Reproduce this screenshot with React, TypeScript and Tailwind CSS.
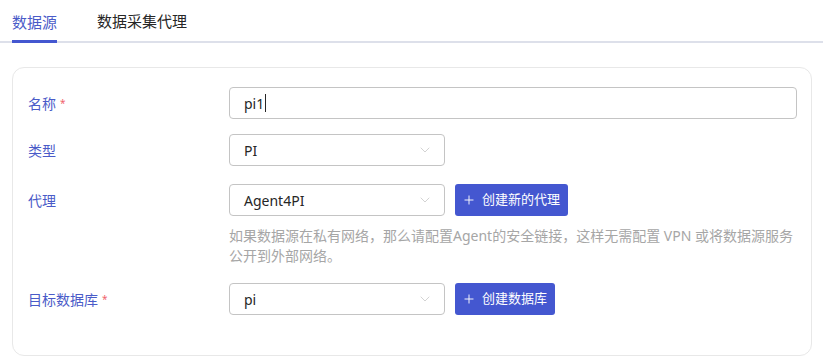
import { ChevronDown, Plus } from "lucide-react";

const font = { fontFamily: '"Noto Sans", "Noto Sans CJK SC", sans-serif' };

function Label({ text, required }: { text: string; required?: boolean }) {
  return (
    <div className="flex items-center text-[14px] text-[#4a5bc8]">
      {text}
      {required && <span className="ml-[4px] text-[10px] text-[#f0646c]">*</span>}
    </div>
  );
}

function Select({ value }: { value: string }) {
  return (
    <div className="flex h-[32px] w-[216px] items-center justify-between rounded-[4px] border border-[#c4c4c4] bg-white pl-[14px] pr-[11px] text-[14px] text-[#262626]">
      <span>{value}</span>
      <ChevronDown className="h-[16px] w-[16px] text-[#c8c8c8]" strokeWidth={1.2} />
    </div>
  );
}

function AddButton({ text }: { text: string }) {
  return (
    <button className="ml-[10px] flex h-[32px] items-center gap-[6px] rounded-[3px] bg-[#4457d0] pl-[7px] pr-[8px] text-[13px] text-white">
      <Plus className="h-[14px] w-[14px]" strokeWidth={1.6} />
      {text}
    </button>
  );
}

export default function App() {
  return (
    <div className="h-[363px] w-[823px] overflow-hidden bg-white" style={font}>
      {/* Tabs */}
      <div className="flex h-[43px] items-end gap-[40px] border-b-[2px] border-[#dde0ea] pl-[12px]">
        <div className="-mb-[2px] border-b-[3px] border-[#4457d0] pb-[7px] text-[15px] text-[#4a5bc8]">数据源</div>
        <div className="pb-[9px] text-[15px] text-[#262626]">数据采集代理</div>
      </div>

      {/* Card */}
      <div className="ml-[12px] mt-[24px] h-[289px] w-[800px] rounded-[12px] border border-[#e8e8e8] pl-[15px] pr-[14px] pt-[19px]">
        <div className="grid grid-cols-[201px_1fr]">
          <Label text="名称" required />
          <div className="flex h-[32px] items-center rounded-[4px] border border-[#c4c4c4] pl-[14px] text-[14px] text-[#262626]">
            pi1<span className="ml-[1px] inline-block h-[18px] w-[1px] bg-[#262626]" />
          </div>

          <div className="col-span-2 h-[15px]" />
          <Label text="类型" />
          <Select value="PI" />

          <div className="col-span-2 h-[18px]" />
          <Label text="代理" />
          <div className="flex">
            <Select value="Agent4PI" />
            <AddButton text="创建新的代理" />
          </div>

          <div />
          <div className="mt-[10px] text-[14px] leading-[20px] text-[#a6a6a6]">
            如果数据源在私有网络，那么请配置Agent的安全链接，这样无需配置 VPN 或将数据源服务
            <br />
            公开到外部网络。
          </div>

          <div className="col-span-2 h-[17px]" />
          <Label text="目标数据库" required />
          <div className="flex">
            <Select value="pi" />
            <AddButton text="创建数据库" />
          </div>
        </div>
      </div>
    </div>
  );
}
